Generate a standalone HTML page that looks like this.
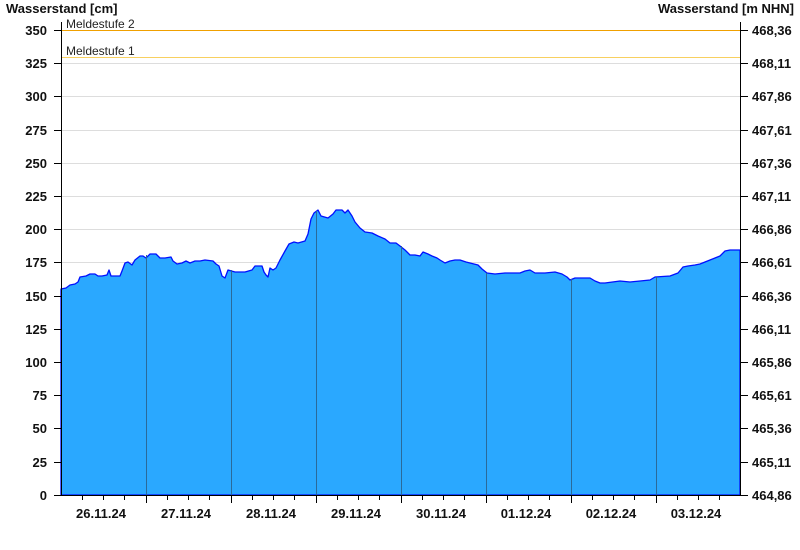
<!DOCTYPE html>
<html><head><meta charset="utf-8"><style>
body{margin:0;background:#fff}
svg{display:block;font-family:"Liberation Sans",Arial,sans-serif}
.l{font-size:13px;font-weight:bold;fill:#111}
</style></head><body>
<svg width="800" height="550" viewBox="0 0 800 550">
<rect width="800" height="550" fill="#fff"/>
<g stroke="#ddd" stroke-width="1">
<line x1="61" x2="740" y1="63.5" y2="63.5"/><line x1="61" x2="740" y1="96.5" y2="96.5"/>
<line x1="61" x2="740" y1="130.5" y2="130.5"/><line x1="61" x2="740" y1="163.5" y2="163.5"/>
<line x1="61" x2="740" y1="196.5" y2="196.5"/><line x1="61" x2="740" y1="229.5" y2="229.5"/>
<line x1="61" x2="740" y1="262.5" y2="262.5"/><line x1="61" x2="740" y1="296.5" y2="296.5"/>
<line x1="61" x2="740" y1="329.5" y2="329.5"/><line x1="61" x2="740" y1="362.5" y2="362.5"/>
<line x1="61" x2="740" y1="395.5" y2="395.5"/><line x1="61" x2="740" y1="428.5" y2="428.5"/>
<line x1="61" x2="740" y1="462.5" y2="462.5"/>
</g>
<line x1="61" x2="740" y1="57.5" y2="57.5" stroke="#f8d060"/>
<line x1="61" x2="740" y1="30.5" y2="30.5" stroke="#f0a000"/>
<text x="66" y="28" font-size="12" fill="#222">Meldestufe 2</text>
<text x="66" y="55" font-size="12" fill="#222">Meldestufe 1</text>
<path d="M61,495 L61,289 66,288 70,285 75,284 78,282 80,277 86,276 90,274 95,274 98,276 102,276 107,275 109,270 111,276 120,276 122,271 125,263 128,262 132,265 135,260 140,256 143,256 146,258 150,254 156,254 160,258 165,258 171,257 173,261 177,264 182,263 186,261 190,263 195,261 200,261 205,260 213,261 216,264 219,266 222,276 225,278 228,270 235,272 245,272 252,270 255,266 262,266 264,272 266,275 268,277 270,268 273,270 276,268 280,260 285,251 289,244 294,242 298,243 305,241 308,234 311,219 314,213 318,210 321,216 328,218 333,214 336,210 342,210 345,213 348,210 352,216 355,222 360,228 365,232 372,233 378,236 385,239 390,243 396,243 400,246 405,250 410,255 415,255 420,256 423,252 428,254 432,256 437,258 440,260 445,263 450,261 455,260 460,260 466,262 470,263 478,265 482,269 487,273 495,274 505,273 520,273 525,271 530,270 535,273 545,273 555,272 562,274 567,277 570,280 575,278 590,278 595,281 600,283 605,283 620,281 630,282 640,281 650,280 655,277 670,276 678,273 683,267 688,266 695,265 700,264 705,262 710,260 715,258 720,256 725,251 730,250 740,250 L740,495 Z" fill="#2aa8ff" stroke="#0010ff" stroke-width="1.3" stroke-linejoin="round"/>
<g stroke="#2a6a9a" stroke-width="1">
<line x1="146.5" x2="146.5" y1="255" y2="495"/><line x1="231.5" x2="231.5" y1="270" y2="495"/>
<line x1="316.5" x2="316.5" y1="211" y2="495"/><line x1="401.5" x2="401.5" y1="246" y2="495"/>
<line x1="486.5" x2="486.5" y1="273" y2="495"/><line x1="571.5" x2="571.5" y1="279" y2="495"/>
<line x1="656.5" x2="656.5" y1="277" y2="495"/>
</g>
<g stroke="#000" stroke-width="1">
<line x1="61.5" x2="61.5" y1="22" y2="496"/><line x1="740.5" x2="740.5" y1="22" y2="496"/>
<line x1="61" x2="741" y1="495.5" y2="495.5"/>
</g>
<g stroke="#000" stroke-width="1" id="lt">
<line x1="54" x2="61" y1="30.5" y2="30.5"/><line x1="54" x2="61" y1="63.5" y2="63.5"/><line x1="54" x2="61" y1="96.5" y2="96.5"/><line x1="54" x2="61" y1="130.5" y2="130.5"/><line x1="54" x2="61" y1="163.5" y2="163.5"/><line x1="54" x2="61" y1="196.5" y2="196.5"/><line x1="54" x2="61" y1="229.5" y2="229.5"/><line x1="54" x2="61" y1="262.5" y2="262.5"/><line x1="54" x2="61" y1="296.5" y2="296.5"/><line x1="54" x2="61" y1="329.5" y2="329.5"/><line x1="54" x2="61" y1="362.5" y2="362.5"/><line x1="54" x2="61" y1="395.5" y2="395.5"/><line x1="54" x2="61" y1="428.5" y2="428.5"/><line x1="54" x2="61" y1="462.5" y2="462.5"/><line x1="54" x2="61" y1="495.5" y2="495.5"/>
</g>
<use href="#lt" transform="translate(687,0)"/>
<g stroke="#000" stroke-width="1">
<line x1="82.5" x2="82.5" y1="495" y2="500"/><line x1="103.5" x2="103.5" y1="495" y2="500"/><line x1="124.5" x2="124.5" y1="495" y2="500"/>
<line x1="167.5" x2="167.5" y1="495" y2="500"/><line x1="188.5" x2="188.5" y1="495" y2="500"/><line x1="209.5" x2="209.5" y1="495" y2="500"/>
<line x1="252.5" x2="252.5" y1="495" y2="500"/><line x1="273.5" x2="273.5" y1="495" y2="500"/><line x1="294.5" x2="294.5" y1="495" y2="500"/>
<line x1="337.5" x2="337.5" y1="495" y2="500"/><line x1="358.5" x2="358.5" y1="495" y2="500"/><line x1="379.5" x2="379.5" y1="495" y2="500"/>
<line x1="422.5" x2="422.5" y1="495" y2="500"/><line x1="443.5" x2="443.5" y1="495" y2="500"/><line x1="464.5" x2="464.5" y1="495" y2="500"/>
<line x1="507.5" x2="507.5" y1="495" y2="500"/><line x1="528.5" x2="528.5" y1="495" y2="500"/><line x1="549.5" x2="549.5" y1="495" y2="500"/>
<line x1="592.5" x2="592.5" y1="495" y2="500"/><line x1="613.5" x2="613.5" y1="495" y2="500"/><line x1="634.5" x2="634.5" y1="495" y2="500"/>
<line x1="677.5" x2="677.5" y1="495" y2="500"/><line x1="698.5" x2="698.5" y1="495" y2="500"/><line x1="719.5" x2="719.5" y1="495" y2="500"/>
<line x1="146.5" x2="146.5" y1="495" y2="503"/><line x1="231.5" x2="231.5" y1="495" y2="503"/><line x1="316.5" x2="316.5" y1="495" y2="503"/><line x1="401.5" x2="401.5" y1="495" y2="503"/><line x1="486.5" x2="486.5" y1="495" y2="503"/><line x1="571.5" x2="571.5" y1="495" y2="503"/><line x1="656.5" x2="656.5" y1="495" y2="503"/>
</g>
<text class="l" x="6" y="13">Wasserstand [cm]</text>
<text class="l" x="794" y="13" text-anchor="end">Wasserstand [m NHN]</text>
<g class="l" text-anchor="end">
<text x="47" y="35">350</text><text x="47" y="68">325</text><text x="47" y="101">300</text><text x="47" y="135">275</text><text x="47" y="168">250</text><text x="47" y="201">225</text><text x="47" y="234">200</text><text x="47" y="267">175</text><text x="47" y="301">150</text><text x="47" y="334">125</text><text x="47" y="367">100</text><text x="47" y="400">75</text><text x="47" y="433">50</text><text x="47" y="467">25</text><text x="47" y="500">0</text>
</g>
<g class="l">
<text x="752" y="35">468,36</text><text x="752" y="68">468,11</text><text x="752" y="101">467,86</text><text x="752" y="135">467,61</text><text x="752" y="168">467,36</text><text x="752" y="201">467,11</text><text x="752" y="234">466,86</text><text x="752" y="267">466,61</text><text x="752" y="301">466,36</text><text x="752" y="334">466,11</text><text x="752" y="367">465,86</text><text x="752" y="400">465,61</text><text x="752" y="433">465,36</text><text x="752" y="467">465,11</text><text x="752" y="500">464,86</text>
</g>
<g class="l" text-anchor="middle">
<text x="101" y="518">26.11.24</text><text x="186" y="518">27.11.24</text><text x="271" y="518">28.11.24</text><text x="356" y="518">29.11.24</text><text x="441" y="518">30.11.24</text><text x="526" y="518">01.12.24</text><text x="611" y="518">02.12.24</text><text x="696" y="518">03.12.24</text>
</g>
</svg>
</body></html>
